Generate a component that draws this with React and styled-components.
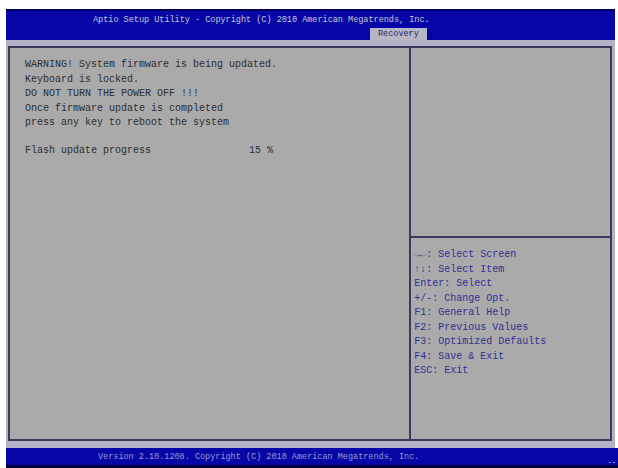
import React from 'react';
import styled, { createGlobalStyle } from 'styled-components';

const Global = createGlobalStyle`
  html, body { margin: 0; padding: 0; background: #ffffff; }
  body { width: 618px; height: 468px; overflow: hidden; }
`;

const Screen = styled.div`
  display: flex;
  flex-direction: column;
  width: 618px;
  height: 468px;
  padding: 9px 0 0 6px;
  box-sizing: border-box;
  font-family: "Liberation Mono", "DejaVu Sans Mono", monospace;
`;

const TopBar = styled.div`
  display: flex;
  flex-direction: column;
  height: 31px;
  margin-right: 3px;
  background: #0606a6;
  border-top: 2px solid #04045c;
  box-sizing: border-box;
`;

const Title = styled.div`
  color: #c8c8d8;
  font-size: 8.5px;
  line-height: 12px;
  margin-top: 3px;
  padding-left: 87px;
  white-space: pre;
`;

const TabRow = styled.div`
  display: flex;
  padding-left: 364px;
  margin-top: 2px;
`;

const Tab = styled.div`
  background: #b6b6c6;
  color: #2a2a5a;
  font-size: 8.5px;
  line-height: 12px;
  padding: 0 8px;
  height: 12px;
`;

const Body = styled.div`
  flex: 1;
  display: flex;
  background: #b2b2c4;
  padding: 6px 3px 7px 2px;
  margin-right: 3px;
`;

const Panel = styled.div`
  display: flex;
  flex-direction: column;
  background: #aaaaaa;
  border: 2px solid #3a3a5a;
  width: ${p => p.$w}px;
  box-sizing: border-box;
  & + & { border-left: none; }
`;

const Text = styled.div`
  color: #2e2e2e;
  font-size: 10px;
  line-height: 14.5px;
  white-space: pre;
`;

const Messages = styled.div`
  display: flex;
  flex-direction: column;
  padding: 10px 0 0 15px;
`;

const ProgressRow = styled.div`
  display: flex;
  margin-top: 13px;
`;

const Label = styled(Text)`
  width: 224px;
`;

const HelpTop = styled.div`
  height: 188px;
  border-bottom: 2px solid #3a3a5a;
`;

const HelpList = styled.div`
  display: flex;
  flex-direction: column;
  padding: 10px 0 0 3px;
`;

const Help = styled(Text)`
  color: #303096;
`;

const Footer = styled.div`
  height: 20px;
  background: #0606a6;
  border-bottom: 3px solid #020240;
  box-sizing: border-box;
  display: flex;
  align-items: center;
  padding-left: 92px;
  position: relative;
`;

const FooterText = styled.div`
  color: #9a9ad0;
  font-size: 8.5px;
  line-height: 12px;
  white-space: pre;
`;

const Corner = styled.div`
  position: absolute;
  right: 2px;
  bottom: 0;
  color: #e0e0ff;
  font-size: 7px;
  line-height: 6px;
`;

const messages = [
  'WARNING! System firmware is being updated.',
  'Keyboard is locked.',
  'DO NOT TURN THE POWER OFF !!!',
  'Once firmware update is completed',
  'press any key to reboot the system',
];

const help = [
  '\u2192\u2190: Select Screen',
  '\u2191\u2193: Select Item',
  'Enter: Select',
  '+/-: Change Opt.',
  'F1: General Help',
  'F2: Previous Values',
  'F3: Optimized Defaults',
  'F4: Save & Exit',
  'ESC: Exit',
];

export default function App() {
  return (
    <Screen>
      <Global />
      <TopBar>
        <Title>Aptio Setup Utility - Copyright (C) 2010 American Megatrends, Inc.</Title>
        <TabRow>
          <Tab>Recovery</Tab>
        </TabRow>
      </TopBar>
      <Body>
        <Panel $w={404}>
          <Messages>
            {messages.map(m => <Text key={m}>{m}</Text>)}
            <ProgressRow>
              <Label>Flash update progress</Label>
              <Text>15 %</Text>
            </ProgressRow>
          </Messages>
        </Panel>
        <Panel $w={201}>
          <HelpTop />
          <HelpList>
            {help.map(h => <Help key={h}>{h}</Help>)}
          </HelpList>
        </Panel>
      </Body>
      <Footer>
        <FooterText>Version 2.10.1208. Copyright (C) 2010 American Megatrends, Inc.</FooterText>
        <Corner>--</Corner>
      </Footer>
    </Screen>
  );
}
